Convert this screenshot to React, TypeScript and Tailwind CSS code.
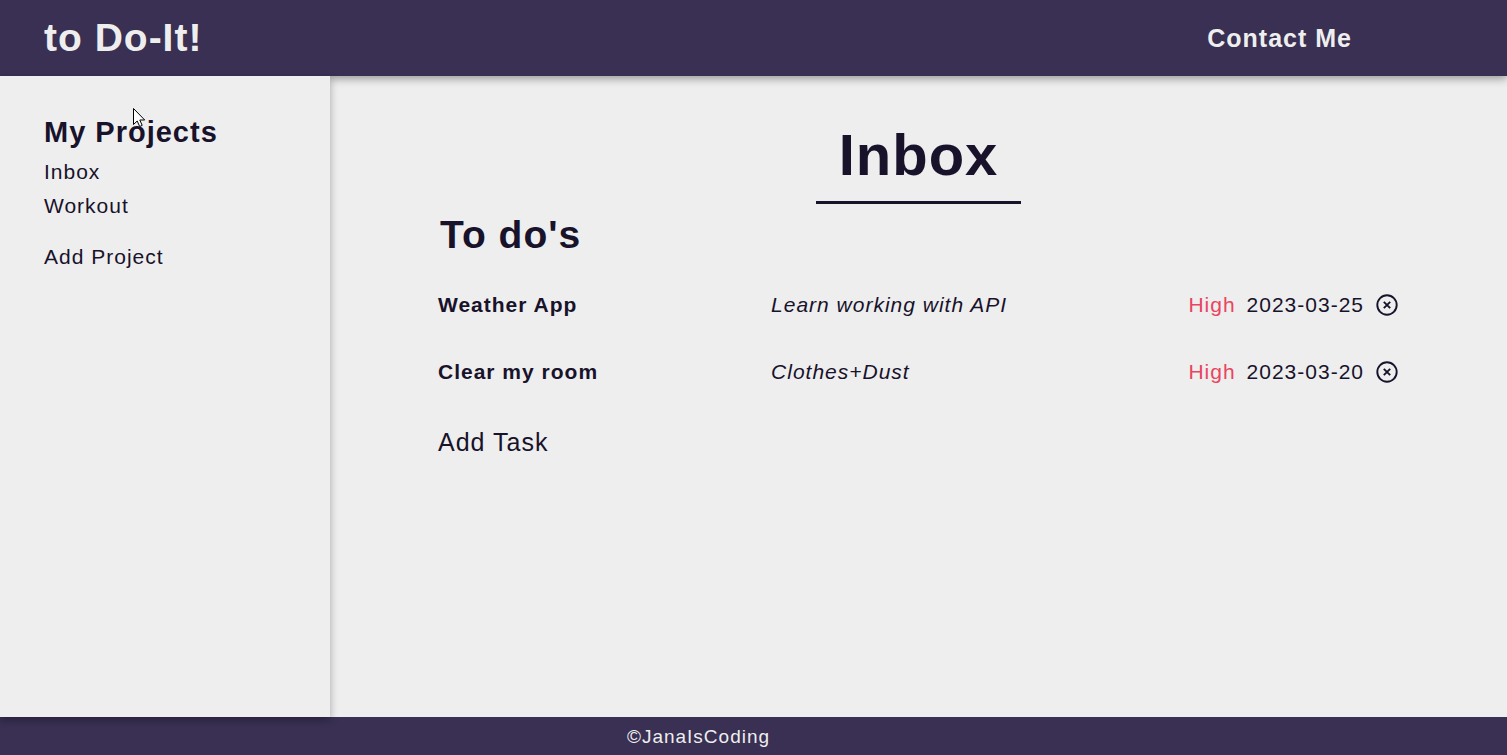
import { useState } from "react";

type Task = {
  title: string;
  details: string;
  priority: string;
  due: string;
};

const initialTasks: Task[] = [
  { title: "Weather App", details: "Learn working with API", priority: "High", due: "2023-03-25" },
  { title: "Clear my room", details: "Clothes+Dust", priority: "High", due: "2023-03-20" },
];

const projects = ["Inbox", "Workout"];

function RemoveIcon() {
  return (
    <svg viewBox="0 0 24 24" className="size-6" fill="none" stroke="currentColor" aria-hidden="true">
      <circle cx="12" cy="12" r="9.7" strokeWidth="1.9" />
      <path d="M8.8 8.8l6.4 6.4M15.2 8.8l-6.4 6.4" strokeWidth="1.9" />
    </svg>
  );
}

function Pointer() {
  return (
    <svg
      viewBox="0 0 12 19"
      className="pointer-events-none absolute top-8 left-[133px] h-[19px] w-3"
      aria-hidden="true"
    >
      <path
        d="M.5 .5V16.5L4.2 13L6.7 18.5L9.2 17.4L6.8 12H11.7Z"
        fill="#fff"
        stroke="#000"
        strokeWidth="1"
      />
    </svg>
  );
}

export default function App() {
  const [tasks, setTasks] = useState(initialTasks);
  const [project, setProject] = useState("Inbox");

  return (
    <div className="flex min-h-screen flex-col bg-[#eeeeee] font-['Liberation_Sans',Arial,sans-serif] text-xl tracking-wider text-[#18122b]">
      <header className="flex h-[76px] items-center justify-between bg-[#393053] pr-[155px] pl-11 font-bold text-[#eeeeee] shadow-[0_3px_8px_rgba(0,0,0,0.35)]">
        <h1 className="text-[39px] leading-11">to Do-It!</h1>
        <a href="#contact" className="text-[25px] leading-6">
          Contact Me
        </a>
      </header>

      <div className="flex flex-1 text-[21px] leading-6">
        <aside className="relative z-10 w-[330px] shrink-0 bg-[#eeeeee] px-11 pt-10 shadow-[0_3px_8px_rgba(0,0,0,0.3)]">
          <h2 className="text-[29px] leading-8 font-bold">My Projects</h2>
          <ul className="mt-3 flex flex-col gap-[10px]">
            {projects.map((name) => (
              <li key={name} className="flex">
                <button type="button" onClick={() => setProject(name)}>
                  {name}
                </button>
              </li>
            ))}
          </ul>
          <button type="button" className="mt-[27px]">
            Add Project
          </button>
          <Pointer />
        </aside>

        <main className="flex min-w-0 flex-1 flex-col px-[108px] pt-[43px]">
          <h2 className="self-center border-b-[3px] px-[23px] pb-[10px] text-[58px] leading-[72px] font-bold">
            {project}
          </h2>
          <h3 className="mt-[9px] px-[2px] text-[39px] leading-11 font-bold">To do's</h3>
          <ul className="mt-9 flex flex-col gap-[43px]">
            {tasks.map((task) => (
              <li key={task.title} className="grid grid-cols-[332fr_416fr_auto] items-center">
                <strong>{task.title}</strong>
                <em>{task.details}</em>
                <div className="flex items-center gap-[11px]">
                  <span className="text-[#e94560]">{task.priority}</span>
                  <time dateTime={task.due}>{task.due}</time>
                  <button
                    type="button"
                    aria-label={`Remove ${task.title}`}
                    onClick={() => setTasks(tasks.filter((other) => other !== task))}
                  >
                    <RemoveIcon />
                  </button>
                </div>
              </li>
            ))}
          </ul>
          <button type="button" className="mt-[42px] self-start text-[25px] leading-8">
            Add Task
          </button>
        </main>
      </div>

      <footer className="flex h-[38px] items-center justify-center bg-[#393053] pt-[2px] pr-[110px] text-[19px] text-[#eeeeee]">
        ©JanaIsCoding
      </footer>
    </div>
  );
}
